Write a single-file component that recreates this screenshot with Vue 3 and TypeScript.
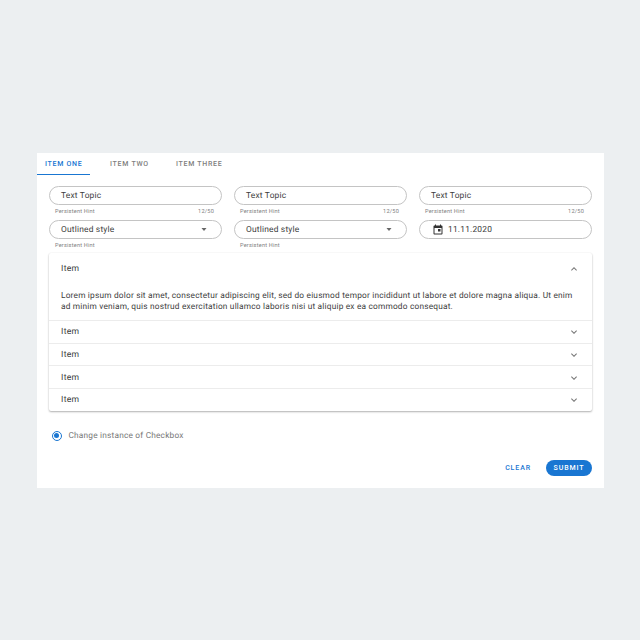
<script setup lang="ts">
const tabs = ['Item One', 'Item Two', 'Item Three']
const topics = [1, 2, 3]
const items = [1, 2, 3, 4]
</script>

<template>
  <div class="page">
    <div class="card">
      <div class="tabs">
        <div v-for="(tab, i) in tabs" :key="tab" class="tab" :class="{ active: i === 0 }">{{ tab }}</div>
      </div>

      <div class="body">
        <div class="fields">
          <div v-for="t in topics" :key="t" class="field">
            <div class="control text-control">Text Topic</div>
            <div class="hint"><span>Persistent Hint</span><span>12/50</span></div>
          </div>

          <div v-for="t in 2" :key="'select' + t" class="field">
            <div class="control select-control">
              <span>Outlined style</span>
              <svg class="caret" width="6" height="3" viewBox="0 0 6 3"><path d="M0.5 0 L5.5 0 L3 3 Z" /></svg>
            </div>
            <div class="hint"><span>Persistent Hint</span></div>
          </div>

          <div class="field">
            <div class="control date-control">
              <svg class="calendar" width="12" height="12" viewBox="0 0 24 24">
                <path d="M19 3h-1V1h-2v2H8V1H6v2H5c-1.11 0-2 .9-2 2v14c0 1.1.89 2 2 2h14c1.1 0 2-.9 2-2V5c0-1.1-.9-2-2-2zm0 16H5V8h14v11zM12 10v5h5v-5h-5z" />
              </svg>
              <span>11.11.2020</span>
            </div>
          </div>
        </div>

        <div class="panels">
          <div class="panel open">
            <div class="panel-header open-header">
              <span>Item</span>
              <svg class="chevron" width="12" height="12" viewBox="0 0 24 24"><path d="M7.41 15.41 12 10.83l4.59 4.58L18 14l-6-6-6 6z" /></svg>
            </div>
            <div class="panel-content">
              Lorem ipsum dolor sit amet, consectetur adipiscing elit, sed do eiusmod tempor incididunt ut labore et dolore magna aliqua. Ut enim ad minim veniam, quis nostrud exercitation ullamco laboris nisi ut aliquip ex ea commodo consequat.
            </div>
          </div>
          <div v-for="n in items" :key="n" class="panel">
            <div class="panel-header">
              <span>Item</span>
              <svg class="chevron" width="12" height="12" viewBox="0 0 24 24"><path d="M7.41 8.59 12 13.17l4.59-4.58L18 10l-6 6-6-6z" /></svg>
            </div>
          </div>
        </div>

        <div class="radio-row">
          <span class="radio"><span class="radio-dot"></span></span>
          <span class="radio-label">Change instance of Checkbox</span>
        </div>

        <div class="actions">
          <button class="btn clear">Clear</button>
          <button class="btn submit">Submit</button>
        </div>
      </div>
    </div>
  </div>
</template>

<style>
html, body {
  margin: 0;
  background: #eceff1;
}
</style>

<style scoped>
.page {
  width: 640px;
  height: 640px;
  box-sizing: border-box;
  padding: 153px 36px 0 37px;
  background: #eceff1;
  font-family: Roboto, "Liberation Sans", sans-serif;
  text-rendering: geometricPrecision;
}

.card {
  width: 567px;
  height: 335px;
  background: #fff;
}

.tabs {
  display: flex;
  height: 22px;
}

.tab {
  height: 22px;
  box-sizing: border-box;
  padding: 0 8px;
  margin-right: 11px;
  line-height: 22px;
  font-size: 7px;
  font-weight: 500;
  letter-spacing: 0.72px;
  white-space: nowrap;
  text-transform: uppercase;
  color: #808080;
}

.tab.active {
  width: 53px;
  margin-right: 12px;
  color: #1976d2;
  border-bottom: 1px solid #1976d2;
}

.body {
  padding: 11px 12px 0 11.5px;
}

.fields {
  display: grid;
  grid-template-columns: repeat(3, 173.5px);
  grid-auto-rows: 34px;
  column-gap: 11.5px;
  height: 67px;
}

.control {
  box-sizing: border-box;
  height: 19px;
  border: 1px solid #c4c4c4;
  border-radius: 10px;
  display: flex;
  align-items: center;
  font-size: 8.4px;
  letter-spacing: 0.2px;
  color: #3c3c3c;
}

.text-control {
  padding-left: 11.5px;
}

.select-control {
  padding: 0 14px 0 11.5px;
  justify-content: space-between;
}

.date-control {
  padding-left: 12.5px;
  gap: 4px;
}

.caret path {
  fill: #666;
}

.calendar path {
  fill: #333;
}

.hint {
  display: flex;
  justify-content: space-between;
  padding: 4px 8px 0 6.5px;
  font-size: 5.6px;
  line-height: 7px;
  letter-spacing: 0.2px;
  color: #808080;
}

.panels {
  margin-left: 0.5px;
  box-shadow: 0 1px 2px rgba(0, 0, 0, 0.3), 0 0 2px rgba(0, 0, 0, 0.06);
  border-radius: 2px;
}

.panel + .panel {
  border-top: 1px solid #ececec;
}

.panel-header {
  height: 21.67px;
  box-sizing: border-box;
  padding: 1px 12px 0;
  display: flex;
  align-items: center;
  justify-content: space-between;
  font-size: 8.6px;
  letter-spacing: 0.3px;
  color: #3c3c3c;
}

.open-header {
  height: 30px;
}

.chevron path {
  fill: #777;
}

.panel-content {
  padding: 8px 18px 7px 12px;
  font-size: 8.3px;
  line-height: 11px;
  letter-spacing: 0.2px;
  color: #3c3c3c;
}

.radio-row {
  display: flex;
  align-items: center;
  gap: 7px;
  margin-top: 20px;
  padding-left: 3px;
}

.radio {
  box-sizing: border-box;
  width: 10px;
  height: 10px;
  border: 1.2px solid #1976d2;
  border-radius: 50%;
  display: flex;
  align-items: center;
  justify-content: center;
}

.radio-dot {
  width: 5px;
  height: 5px;
  border-radius: 50%;
  background: #1976d2;
}

.radio-label {
  font-size: 8.3px;
  letter-spacing: 0.2px;
  color: #777;
}

.actions {
  display: flex;
  justify-content: flex-end;
  align-items: center;
  gap: 7px;
  margin-top: 19px;
}

.btn {
  height: 16px;
  border: 0;
  padding: 0 8px;
  border-radius: 8px;
  font-family: inherit;
  font-size: 7px;
  font-weight: 500;
  letter-spacing: 0.9px;
  text-transform: uppercase;
}

.clear {
  background: transparent;
  color: #1976d2;
}

.submit {
  width: 46px;
  padding: 0;
  background: #1976d2;
  color: #fff;
}
</style>
